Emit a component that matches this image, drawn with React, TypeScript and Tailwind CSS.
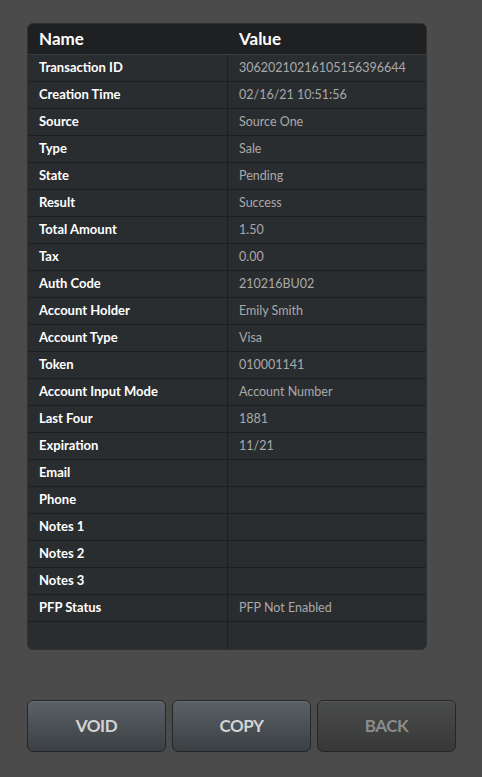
const rows: [string, string][] = [
  ['Transaction ID', '30620210216105156396644'],
  ['Creation Time', '02/16/21 10:51:56'],
  ['Source', 'Source One'],
  ['Type', 'Sale'],
  ['State', 'Pending'],
  ['Result', 'Success'],
  ['Total Amount', '1.50'],
  ['Tax', '0.00'],
  ['Auth Code', '210216BU02'],
  ['Account Holder', 'Emily Smith'],
  ['Account Type', 'Visa'],
  ['Token', '010001141'],
  ['Account Input Mode', 'Account Number'],
  ['Last Four', '1881'],
  ['Expiration', '11/21'],
  ['Email', ''],
  ['Phone', ''],
  ['Notes 1', ''],
  ['Notes 2', ''],
  ['Notes 3', ''],
  ['PFP Status', 'PFP Not Enabled'],
  ['', ''],
]

function ActionButton({ label, disabled }: { label: string; disabled?: boolean }) {
  const tone = disabled
    ? 'bg-gradient-to-b from-[#4a4b4c] to-[#383838] text-[#8c8c8c]'
    : 'bg-gradient-to-b from-[#5b6167] to-[#3b4044] text-[#d4d4d4]'
  return (
    <button
      className={`w-[139px] h-[52px] rounded-md border border-[#262626] text-[17px] font-bold tracking-tight shadow-[inset_0_1px_0_rgba(255,255,255,0.08)] ${tone}`}
    >
      {label}
    </button>
  )
}

export default function App() {
  return (
    <div
      className="w-[482px] h-[777px] bg-[#4b4b4b] pt-[23px] pl-[27px] flex flex-col"
      style={{ fontFamily: 'Lato, "Liberation Sans", sans-serif' }}
    >
      {/* Details table */}
      <div className="w-[400px] rounded-md overflow-hidden border border-[#2f3133] bg-[#2a2d30]">
        <div className="flex h-[31px] items-center bg-[#1f2022] border-b border-[#3a3c3e] text-white text-[17px] font-bold">
          <div className="w-[200px] pl-[11px]">Name</div>
          <div className="flex-1 pl-[11px]">Value</div>
        </div>
        {rows.map(([name, value], i) => (
          <div
            key={i}
            className={`flex h-[27px] items-center ${i < rows.length - 1 ? 'border-b border-[#1d1f21]' : ''}`}
          >
            <div className="w-[200px] h-full flex items-center pl-[11px] text-[13px] font-bold text-white border-r border-[#1d1f21]">
              {name}
            </div>
            <div className="flex-1 pl-[11px] text-[12.5px] text-[#a9a9a9]">{value}</div>
          </div>
        ))}
      </div>

      {/* Actions */}
      <div className="mt-[50px] flex gap-[6px]">
        <ActionButton label="VOID" />
        <ActionButton label="COPY" />
        <ActionButton label="BACK" disabled />
      </div>
    </div>
  )
}
